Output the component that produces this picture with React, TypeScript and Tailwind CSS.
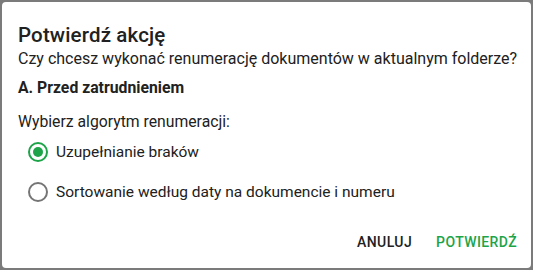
import React, { useState } from "react";

const options = [
  { id: "fill", label: "Uzupełnianie braków" },
  { id: "sort", label: "Sortowanie według daty na dokumencie i numeru" },
];

function RadioIcon({ checked }: { checked: boolean }) {
  return (
    <svg width="24" height="24" viewBox="0 0 24 24" className="shrink-0">
      <circle
        cx="12"
        cy="12"
        r="9"
        fill="none"
        stroke={checked ? "#1da449" : "#757575"}
        strokeWidth="2"
      />
      {checked && <circle cx="12" cy="12" r="5" fill="#1da449" />}
    </svg>
  );
}

export default function App() {
  const [value, setValue] = useState("fill");

  return (
    <div
      className="w-[533px] h-[270px] bg-[#7b7b7b] p-[2px] text-[#212121] overflow-hidden"
      style={{ fontFamily: "Roboto, 'Liberation Sans', sans-serif" }}
    >
      <div className="h-full bg-white rounded-[4px] flex flex-col pl-[16px] pr-[6px] pt-[21px] whitespace-nowrap">
        <h2 className="text-[20.5px] leading-[24px] font-medium tracking-[0.15px]">Potwierdź akcję</h2>
        <p className="text-[16px] leading-[24px]">
          Czy chcesz wykonać renumerację dokumentów w aktualnym folderze?
        </p>
        <p className="mt-[5px] text-[15.75px] leading-[24px] font-bold">A. Przed zatrudnieniem</p>
        <p className="mt-[12px] text-[15.75px] leading-[20px]">Wybierz algorytm renumeracji:</p>
        <div className="flex flex-col pl-[8px]">
          {options.map((o) => (
            <label
              key={o.id}
              className="h-[40px] flex items-center gap-[6px] cursor-pointer"
              onClick={() => setValue(o.id)}
            >
              <RadioIcon checked={value === o.id} />
              <span className="text-[15.5px] leading-[24px]">{o.label}</span>
            </label>
          ))}
        </div>
        <div className="mt-[12px] flex justify-end gap-[8px]">
          <button className="h-[36px] px-[8px] text-[14px] font-medium uppercase tracking-[0.4px] text-[#212121]">
            Anuluj
          </button>
          <button className="h-[36px] px-[8px] text-[14px] font-medium uppercase tracking-[0.4px] text-[#1da449]">
            Potwierdź
          </button>
        </div>
      </div>
    </div>
  );
}
